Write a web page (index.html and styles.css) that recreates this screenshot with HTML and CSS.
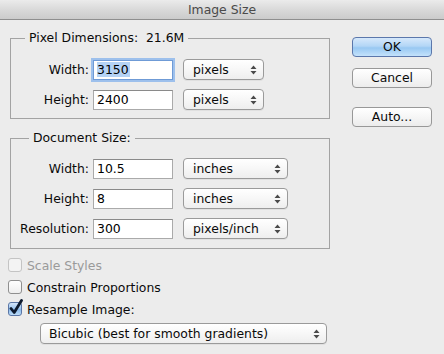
FILE: index.html
```html
<!DOCTYPE html>
<html>
<head>
<meta charset="utf-8">
<link rel="stylesheet" href="styles.css">
</head>
<body>
<div class="window">
  <div class="titlebar">Image Size</div>
  <div class="main">
    <div class="left">
      <fieldset class="group g1">
        <legend>Pixel Dimensions:&nbsp; 21.6M</legend>
        <div class="row">
          <label class="lbl">Width:</label>
          <div class="input focus"><span class="sel">3150</span></div>
          <div class="popup w81"><span>pixels</span><svg class="arr" width="7" height="10" viewBox="0 0 7 10"><path d="M3.5 0.5L6.5 4H0.5Z M0.5 6H6.5L3.5 9.5Z" fill="#4a4a4a"/></svg></div>
        </div>
        <div class="row">
          <label class="lbl">Height:</label>
          <div class="input">2400</div>
          <div class="popup w81"><span>pixels</span><svg class="arr" width="7" height="10" viewBox="0 0 7 10"><path d="M3.5 0.5L6.5 4H0.5Z M0.5 6H6.5L3.5 9.5Z" fill="#4a4a4a"/></svg></div>
        </div>
      </fieldset>
      <fieldset class="group g2">
        <legend>Document Size:</legend>
        <div class="row">
          <label class="lbl">Width:</label>
          <div class="input">10.5</div>
          <div class="popup w105"><span>inches</span><svg class="arr" width="7" height="10" viewBox="0 0 7 10"><path d="M3.5 0.5L6.5 4H0.5Z M0.5 6H6.5L3.5 9.5Z" fill="#4a4a4a"/></svg></div>
        </div>
        <div class="row">
          <label class="lbl">Height:</label>
          <div class="input">8</div>
          <div class="popup w105"><span>inches</span><svg class="arr" width="7" height="10" viewBox="0 0 7 10"><path d="M3.5 0.5L6.5 4H0.5Z M0.5 6H6.5L3.5 9.5Z" fill="#4a4a4a"/></svg></div>
        </div>
        <div class="row">
          <label class="lbl">Resolution:</label>
          <div class="input">300</div>
          <div class="popup w105"><span>pixels/inch</span><svg class="arr" width="7" height="10" viewBox="0 0 7 10"><path d="M3.5 0.5L6.5 4H0.5Z M0.5 6H6.5L3.5 9.5Z" fill="#4a4a4a"/></svg></div>
        </div>
      </fieldset>
      <div class="checks">
        <div class="check disabled"><span class="box"></span><span>Scale Styles</span></div>
        <div class="check"><span class="box"></span><span>Constrain Proportions</span></div>
        <div class="check"><span class="box checked"><svg width="16" height="17" viewBox="0 0 16 17"><path d="M3 9.5L6.2 13.5L13.5 1.5" fill="none" stroke="#0d1a2e" stroke-width="2.8" stroke-linecap="round" stroke-linejoin="round"/></svg></span><span>Resample Image:</span></div>
      </div>
      <div class="popup wide"><span>Bicubic (best for smooth gradients)</span><svg class="arr" width="7" height="10" viewBox="0 0 7 10"><path d="M3.5 0.5L6.5 4H0.5Z M0.5 6H6.5L3.5 9.5Z" fill="#4a4a4a"/></svg></div>
    </div>
    <div class="right">
      <div class="btn default">OK</div>
      <div class="btn cancel">Cancel</div>
      <div class="btn">Auto...</div>
    </div>
  </div>
</div>
</body>
</html>
```

FILE: styles.css
```css
html, body {
  margin: 0;
  padding: 0;
}
body {
  width: 444px;
  height: 354px;
  background: #ececec;
  font-family: "DejaVu Sans", sans-serif;
  font-size: 12.4px;
  color: #0a0a0a;
  overflow: hidden;
}
.titlebar {
  height: 19px;
  line-height: 20px;
  text-align: center;
  color: #4a4a4a;
  background: linear-gradient(#ebebeb, #d6d6d6 60%, #cbcbcb);
  border-bottom: 1px solid #8e8e8e;
}
.main {
  display: flex;
  padding-left: 8px;
}
.left {
  width: 322px;
  display: flex;
  flex-direction: column;
}
.right {
  width: 80px;
  margin-left: 22px;
  padding-top: 17px;
  display: flex;
  flex-direction: column;
}
.group {
  margin: 0 0 0 2px;
  width: 318px;
  border: 1px solid #a3a3a3;
  padding: 0;
  min-inline-size: 0;
  display: flex;
  flex-direction: column;
  gap: 9px;
}
.group legend {
  line-height: 16px;
  padding: 0 4px;
}
.g1 {
  margin-top: 10px;
  padding-top: 13px;
  padding-bottom: 8px;
}
.g1 legend { margin-left: 14px; }
.g2 {
  margin-top: 11px;
  padding-top: 12px;
  padding-bottom: 9px;
}
.g2 legend { margin-left: 18px; }
.row {
  display: flex;
  align-items: center;
  height: 21px;
}
.lbl {
  width: 78px;
  margin-right: 4px;
  text-align: right;
}
.input {
  box-sizing: border-box;
  width: 80px;
  height: 20px;
  line-height: 18px;
  padding-left: 3px;
  background: #fff;
  border: 1px solid #aaa;
  border-top-color: #8a8a8a;
  color: #000;
}
.input.focus {
  border-color: #6f9bd6;
  box-shadow: 0 0 0 2px #9dc0ec;
}
.sel {
  background: #b5d3f5;
  padding-right: 1px;
}
.popup {
  box-sizing: border-box;
  height: 21px;
  margin-left: 10px;
  border: 1px solid #9a9a9a;
  border-radius: 4px;
  background: linear-gradient(#ffffff, #f7f7f7 50%, #eeeeee);
  box-shadow: 0 1px 0 rgba(0,0,0,0.05);
  display: flex;
  align-items: center;
  justify-content: space-between;
  padding: 0 6px 0 9px;
}
.popup .arr { display: block; }
.w81 { width: 81px; }
.w105 { width: 105px; }
.wide {
  width: 287px;
  margin-left: 32px;
  margin-top: 3px;
  padding-left: 8px;
}
.checks {
  margin-top: 5px;
  display: flex;
  flex-direction: column;
}
.check {
  height: 22px;
  display: flex;
  align-items: center;
  gap: 5px;
}
.check.disabled { color: #9a9a9a; }
.box {
  box-sizing: border-box;
  width: 14px;
  height: 14px;
  border: 1px solid #8f8f8f;
  border-radius: 3px;
  background: linear-gradient(#ffffff, #eeeeee);
  position: relative;
}
.check.disabled .box { border-color: #c4c4c4; background: #f3f3f3; }
.box.checked {
  border-color: #5a76a6;
  background: linear-gradient(#d4e6fa, #99c3ee 50%, #86b7ea 51%, #bcdcf8);
}
.box svg {
  position: absolute;
  left: -1px;
  top: -4px;
}
.btn {
  box-sizing: border-box;
  height: 20px;
  line-height: 18px;
  text-align: center;
  border: 1px solid #989898;
  border-radius: 4px;
  background: linear-gradient(#ffffff, #f6f6f6 50%, #ececec);
  margin-bottom: 19px;
}
.btn.default {
  border-color: #5b77ab;
  background: linear-gradient(#d6e8fb, #b3d6f6 45%, #98c8f2 55%, #c4e2fb);
  margin-bottom: 11px;
}
.btn.cancel { margin-bottom: 19px; }
```
